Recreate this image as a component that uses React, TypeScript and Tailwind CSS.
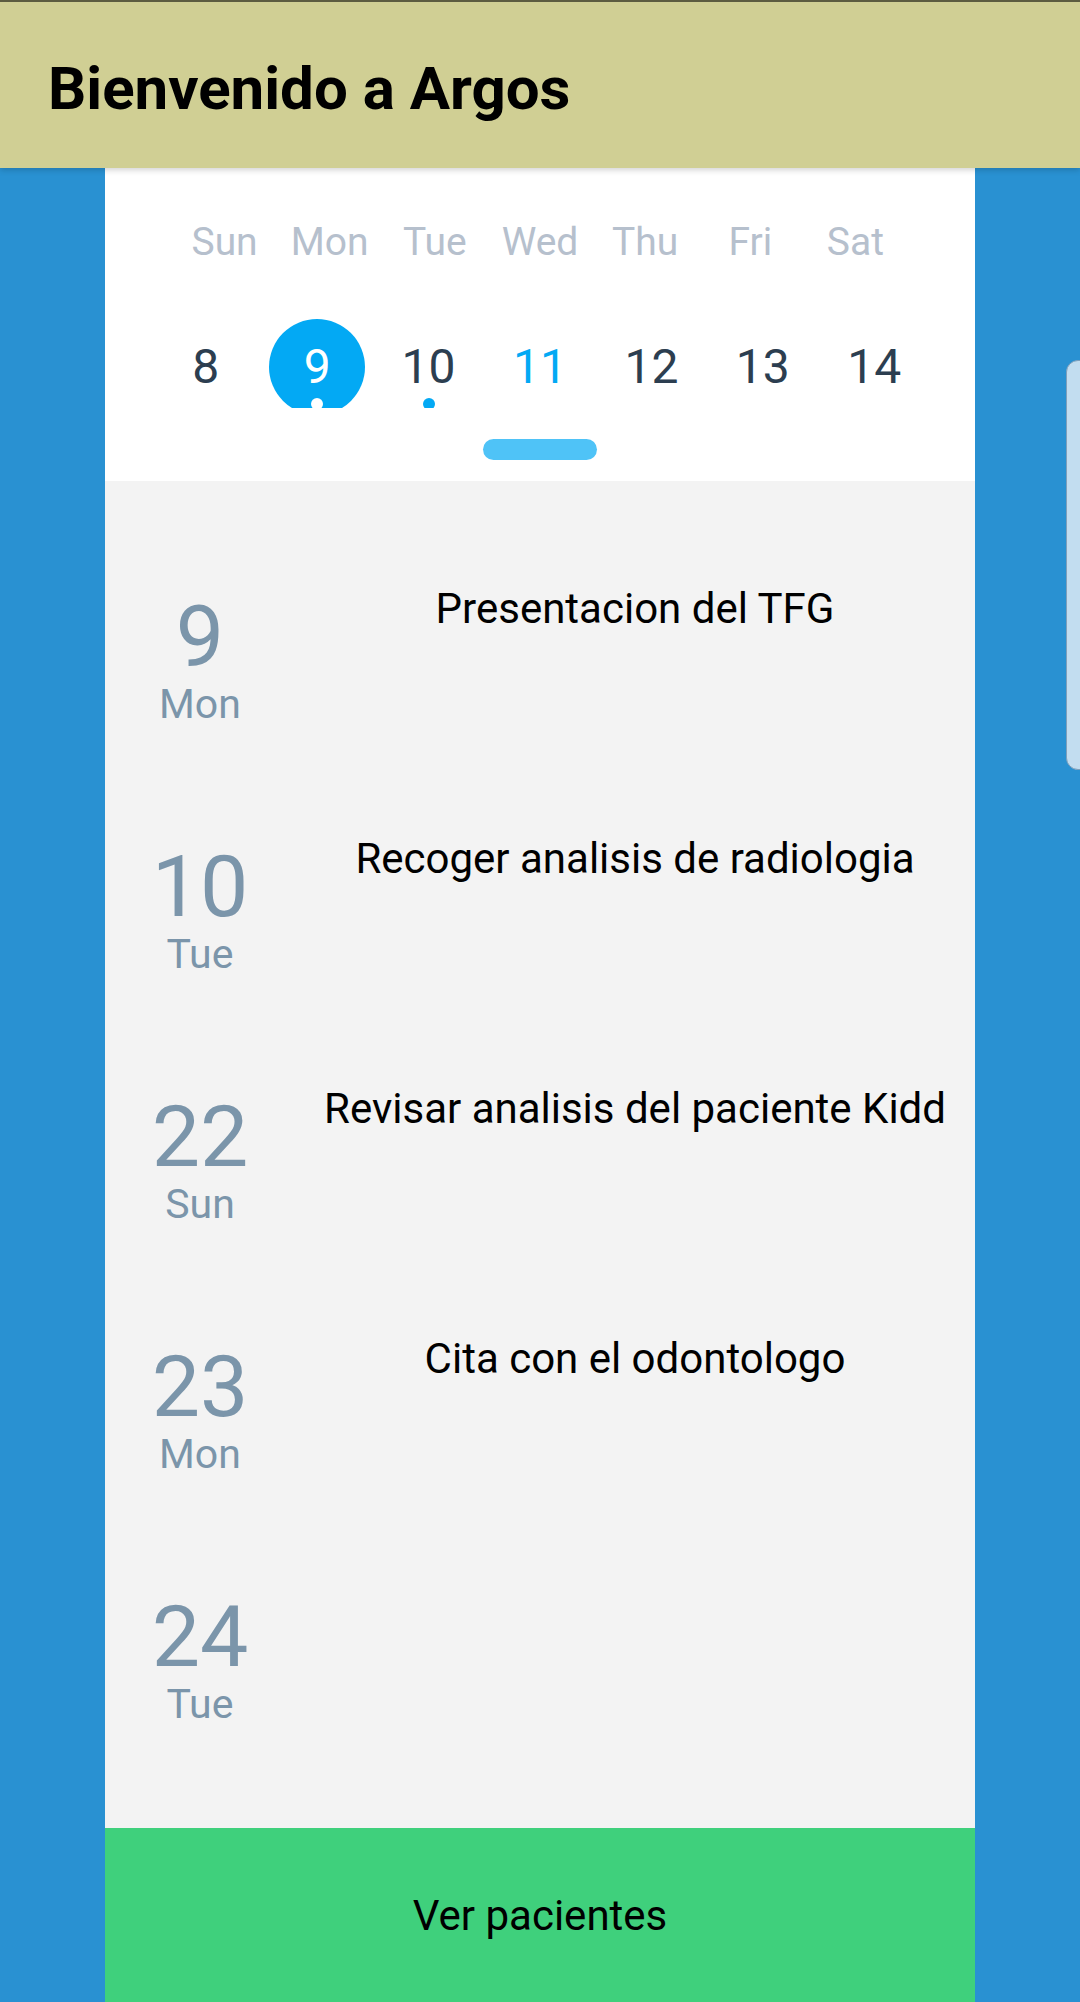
import React from "react";

const weekdays = ["Sun", "Mon", "Tue", "Wed", "Thu", "Fri", "Sat"];
const days = [
  { n: "8" },
  { n: "9", selected: true, dot: true },
  { n: "10", dot: true },
  { n: "11", today: true },
  { n: "12" },
  { n: "13" },
  { n: "14" },
];

const events = [
  { n: "9", d: "Mon", t: "Presentacion del TFG" },
  { n: "10", d: "Tue", t: "Recoger analisis de radiologia" },
  { n: "22", d: "Sun", t: "Revisar analisis del paciente Kidd" },
  { n: "23", d: "Mon", t: "Cita con el odontologo" },
  { n: "24", d: "Tue", t: "" },
];

export default function App() {
  return (
    <div className="relative flex h-[2002px] w-[1080px] flex-col overflow-hidden bg-[#2991d2] font-['Roboto',sans-serif]">
      <header className="relative z-10 h-[168px] shrink-0 border-t-2 border-[#5c5c40] bg-[#d0cf94] pl-[48px] pt-[57px] shadow-[0_2px_6px_rgba(0,0,0,0.18)]">
        <h1 className="text-[60px] font-bold leading-[60px] text-black">Bienvenido a Argos</h1>
      </header>

      <main className="mx-[105px] flex flex-1 flex-col">
        <section className="bg-white pb-[21px] pt-[55px]">
          <div className="flex px-[67px]">
            {weekdays.map((w) => (
              <div key={w} className="flex-1 text-center text-[39px] leading-[39px] text-[#b6c0cd]">
                {w}
              </div>
            ))}
          </div>
          <div className="mt-[57px] flex h-[89px] overflow-hidden px-[45px]">
            {days.map((d) => (
              <div key={d.n} className="flex flex-1 justify-center">
                <div
                  className={
                    "relative flex h-[96px] w-[96px] shrink-0 items-center justify-center rounded-full text-[48px] leading-[48px] " +
                    (d.selected ? "bg-[#03a9f4] text-white" : d.today ? "text-[#03a9f4]" : "text-[#2c3e50]")
                  }
                >
                  {d.n}
                  {d.dot && (
                    <span
                      className={
                        "absolute left-1/2 top-[79px] h-[12px] w-[12px] -translate-x-1/2 rounded-full " +
                        (d.selected ? "bg-white" : "bg-[#03a9f4]")
                      }
                    />
                  )}
                </div>
              </div>
            ))}
          </div>
          <div className="mx-auto mt-[31px] h-[21px] w-[114px] rounded-full bg-[#4fc3f7]" />
        </section>

        <section className="flex-1 bg-[#f3f3f3] pt-[17px]">
          {events.map((e) => (
            <div key={e.n} className="flex h-[250px]">
              <div className="flex w-[190px] shrink-0 flex-col items-center pt-[96px] text-[#7b95aa]">
                <div className="text-[86px] leading-[86px]">{e.n}</div>
                <div className="mt-[4px] text-[41px] leading-[41px]">{e.d}</div>
              </div>
              <div className="flex-1 pt-[90px] text-center text-[42px] leading-[42px] text-black">{e.t}</div>
            </div>
          ))}
        </section>

        <button className="h-[174px] shrink-0 bg-[#3fd07c] pt-[2px] text-center text-[42px] leading-[42px] text-black">
          Ver pacientes
        </button>
      </main>

      <div className="absolute right-[-6px] top-[360px] h-[410px] w-[20px] rounded-l-[12px] border border-[#7f9fba] bg-[#c2ddf0]" />
    </div>
  );
}
